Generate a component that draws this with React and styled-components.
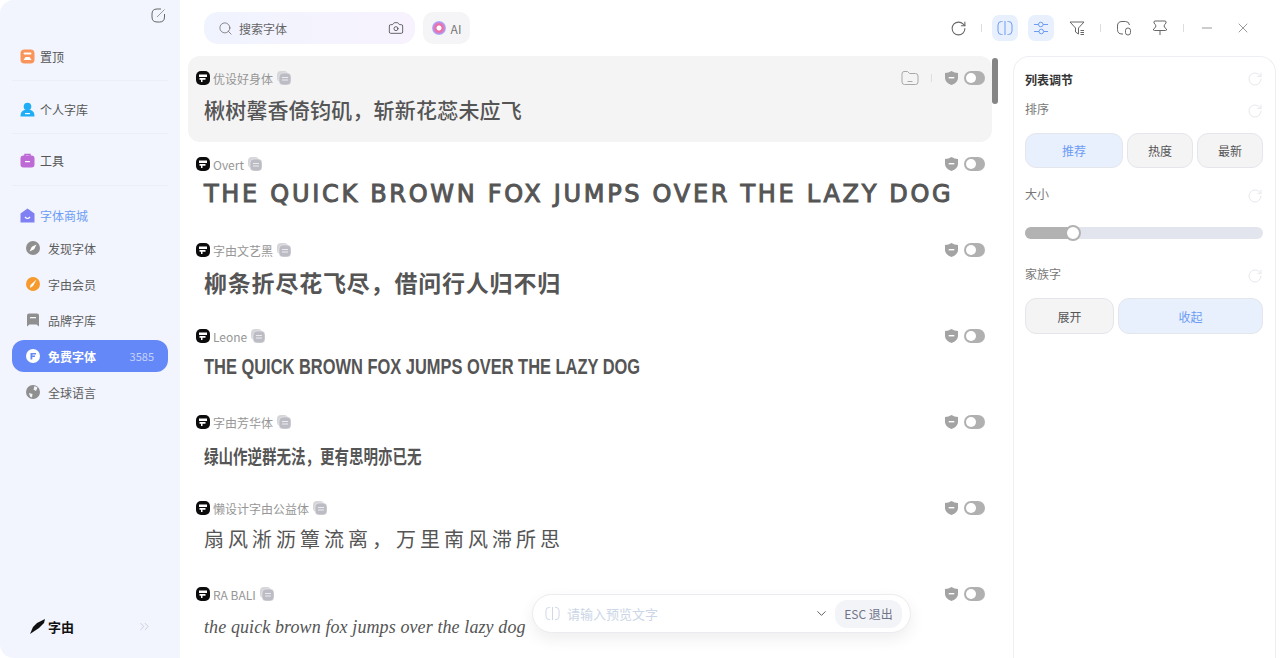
import React from "react";
import styled, { createGlobalStyle } from "styled-components";
import { Camera, ChevronDown, ChevronsRight, Minus, RotateCw, Search, X } from "lucide-react";

const GlobalStyle = createGlobalStyle`
  html, body {
    margin: 0;
    height: 100%;
    overflow: hidden;
    background: #fff;
  }
  * {
    box-sizing: border-box;
  }
  #root {
    height: 100%;
    font-family: "Noto Sans CJK SC", "Noto Sans", sans-serif;
  }
`;

const Shell = styled.div`
  position: relative;
  display: flex;
  width: 1280px;
  height: 658px;
  background: #fff;
`;

const Sidebar = styled.aside`
  width: 180px;
  flex-shrink: 0;
  height: 100%;
  display: flex;
  flex-direction: column;
  padding: 0 12px;
  background: #f2f5fe;
  border-radius: 14px 0 0 14px;
`;

const SideTop = styled.div`
  height: 32px;
  display: flex;
  justify-content: flex-end;
  padding: 8px 2px 0 0;
`;

const Section = styled.div`
  height: ${p => p.$h || 52}px;
  padding-top: ${p => p.$pad || 0}px;
  padding-left: 8px;
  display: flex;
  align-items: center;
  gap: 5px;
  font-size: 12px;
  color: ${p => p.$color || "#555"};
  border-bottom: ${p => (p.$line ? "1px solid #ebeef5" : "none")};
`;

const NavList = styled.nav`
  display: flex;
  flex-direction: column;
  gap: 4px;
`;

const NavItem = styled.div`
  height: 32px;
  display: flex;
  align-items: center;
  gap: 8px;
  padding: 0 14px;
  border-radius: 12px;
  font-size: 12px;
  font-weight: ${p => (p.$active ? 700 : 400)};
  color: ${p => (p.$active ? "#fff" : "#5c5c5c")};
  background: ${p => (p.$active ? "#6488f7" : "transparent")};
`;

const Count = styled.span`
  margin-left: auto;
  font-size: 11px;
  font-weight: 400;
  color: #c5d2fb;
`;

const SideFoot = styled.div`
  margin-top: auto;
  height: 60px;
  display: flex;
  align-items: center;
  justify-content: space-between;
  padding: 0 16px 4px 17px;
  color: #b0b6c6;
`;

const Logo = styled.div`
  display: flex;
  align-items: center;
  gap: 2px;
  font-family: "Liberation Serif", "Noto Sans CJK SC", serif;
  font-weight: 700;
  font-size: 13px;
  color: #111;
`;

const Main = styled.main`
  flex: 1;
  min-width: 0;
  display: flex;
  flex-direction: column;
`;

const TopBar = styled.header`
  height: 56px;
  flex-shrink: 0;
  display: flex;
  align-items: center;
  padding: 0 19px 0 24px;
`;

const SearchBox = styled.div`
  width: 211px;
  height: 32px;
  display: flex;
  align-items: center;
  gap: 6px;
  padding: 0 11px 0 14px;
  border-radius: 14px;
  background: linear-gradient(90deg, #f0f4fe, #f7f2fe);
  font-size: 12px;
  color: #666;
  svg:last-child {
    margin-left: auto;
  }
`;

const AiButton = styled.div`
  width: 47px;
  height: 32px;
  margin-left: 8px;
  display: flex;
  align-items: center;
  justify-content: center;
  gap: 5px;
  border-radius: 10px;
  background: #f5f5f7;
  font-size: 12px;
  color: #777;
`;

const AiDot = styled.span`
  width: 14px;
  height: 14px;
  border-radius: 50%;
  background: radial-gradient(circle, #fff 0 2px, #ec6fa8 3px 4px, #b795ee 6px, #a8c4f5 7px);
`;

const Tools = styled.div`
  margin-left: auto;
  display: flex;
  align-items: center;
  color: #666;
`;

const ToolBtn = styled.div`
  width: 26px;
  height: 26px;
  margin: 0 5px;
  display: flex;
  align-items: center;
  justify-content: center;
  border-radius: 7px;
  color: ${p => (p.$on ? "#6c9cf5" : "#666")};
  background: ${p => (p.$on ? "#e8f0fe" : "transparent")};
`;

const ToolSep = styled.i`
  width: 1px;
  height: 8px;
  margin: 0 5px;
  background: #ddd;
`;

const Content = styled.div`
  flex: 1;
  min-height: 0;
  display: flex;
  padding: 0 4px 0 8px;
`;

const ListWrap = styled.div`
  position: relative;
  width: 812px;
  flex-shrink: 0;
  overflow: hidden;
`;

const Scrollbar = styled.div`
  position: absolute;
  top: 2px;
  right: 2px;
  width: 6px;
  height: 46px;
  border-radius: 3px;
  background: #858585;
`;

const Row = styled.div`
  width: 804px;
  height: 86px;
  padding: 14px 7px 0 8px;
  border-radius: 12px;
  background: ${p => (p.$active ? "#f4f4f4" : "transparent")};
`;

const Meta = styled.div`
  height: 16px;
  display: flex;
  align-items: center;
  font-size: 12px;
  color: #969696;
`;

const MetaName = styled.span`
  margin: 0 4px 0 3px;
`;

const MetaRight = styled.div`
  margin-left: auto;
  display: flex;
  align-items: center;
  gap: 6px;
`;

const Folder = styled.span`
  display: flex;
  color: #a8a8a8;
  margin-right: 6px;
`;

const Sep = styled.i`
  width: 1px;
  height: 8px;
  margin-right: 7px;
  background: #ddd;
`;

const Toggle = styled.span`
  width: 21px;
  height: 14px;
  padding: 2px;
  border-radius: 7px;
  background: #b0b0b0;
  display: flex;
  span {
    width: 10px;
    height: 10px;
    border-radius: 50%;
    background: #fff;
  }
`;

const Sample = styled.div`
  height: 40px;
  margin-top: ${p => p.$top ?? 3}px;
  padding-left: 8px;
  display: flex;
  align-items: center;
  white-space: nowrap;
  color: #555;
  font-family: ${p => p.$family || '"Noto Sans CJK SC", sans-serif'};
  font-size: ${p => p.$size}px;
  font-weight: ${p => p.$weight || 400};
  font-style: ${p => (p.$italic ? "italic" : "normal")};
  letter-spacing: ${p => p.$spacing || 0}px;
  -webkit-text-stroke: ${p => p.$stroke || 0}px #555;
`;

const SampleText = styled.span`
  display: inline-block;
  transform-origin: left center;
  transform: scale(${p => p.$scaleX || 1}, ${p => p.$scaleY || 1});
`;

const Panel = styled.section`
  margin-left: 13px;
  width: 263px;
  height: 100%;
  padding: 13px 12px 0 11px;
  border: 1px solid #eeeff2;
  border-bottom: none;
  border-radius: 16px 16px 0 0;
`;

const PanelHead = styled.div`
  height: 18px;
  display: flex;
  align-items: center;
  justify-content: space-between;
  font-size: 12px;
  font-weight: ${p => (p.$title ? 700 : 400)};
  color: ${p => (p.$title ? "#333" : "#777")};
  margin-top: ${p => p.$top || 0}px;
  svg {
    color: #e6e8ee;
    margin-top: ${p => (p.$title ? 0 : 5)}px;
  }
`;

const PanelRow = styled.div`
  display: grid;
  grid-template-columns: ${p => p.$cols};
  gap: 4px;
  margin-top: ${p => p.$top}px;
`;

const Choice = styled.div`
  height: ${p => p.$h || 36}px;
  display: flex;
  align-items: center;
  justify-content: center;
  font-size: 12px;
  border-radius: 11px;
  border: 1px solid #e4e6ec;
  color: ${p => (p.$on ? "#6c9cf5" : "#555")};
  background: ${p => (p.$on ? "#e8f0fd" : "#f4f4f5")};
`;

const Slider = styled.div`
  position: relative;
  height: 12px;
  margin-top: 25px;
  border-radius: 6px;
  background: #e2e5ed;
`;

const SliderFill = styled.div`
  height: 100%;
  border-radius: 6px;
  background: #b2b2b2;
`;

const SliderThumb = styled.span`
  position: absolute;
  top: -2px;
  width: 16px;
  height: 16px;
  border-radius: 50%;
  background: #fff;
  border: 2px solid #b2b2b2;
`;

const PreviewBar = styled.div`
  position: absolute;
  left: 532px;
  top: 594px;
  width: 379px;
  height: 39px;
  display: flex;
  align-items: center;
  padding: 0 8px 0 12px;
  border: 1px solid #ececf0;
  border-radius: 20px;
  background: #fff;
  box-shadow: 0 6px 16px rgba(0, 0, 0, 0.07);
  font-size: 13px;
  color: #cbd6e6;
`;

const PreviewText = styled.span`
  margin-left: 7px;
`;

const EscBtn = styled.div`
  width: 67px;
  height: 28px;
  margin-left: 6px;
  display: flex;
  align-items: center;
  justify-content: center;
  border-radius: 12px;
  background: #f3f4f7;
  font-size: 12px;
  color: #70748a;
`;

const PreviewChevron = styled(ChevronDown)`
  margin-left: auto;
  color: #555;
`;

const Sq = ({ c, children }) => (
  <svg width="15" height="15" viewBox="0 0 15 15">
    <rect x="0.5" y="0.5" width="14" height="14" rx="4" fill={c} />
    {children}
  </svg>
);

const PinIcon = () => (
  <Sq c="#f9955a">
    <rect x="3.5" y="3.5" width="8" height="2" fill="#fff" rx="1" />
    <path d="M3.5 11 L5.5 8 H9.5 L11.5 11 Z" fill="#fff" />
  </Sq>
);

const UserIcon = () => (
  <svg width="15" height="15" viewBox="0 0 15 15">
    <circle cx="7.5" cy="4.5" r="3.8" fill="#1faef5" />
    <path d="M0.5 14.5 C0.5 9.5 3 7.5 7.5 7.5 C12 7.5 14.5 9.5 14.5 14.5 Z" fill="#1faef5" />
    <rect x="5" y="11" width="5" height="1.2" fill="#fff" />
  </svg>
);

const ToolIcon = () => (
  <svg width="15" height="15" viewBox="0 0 15 15">
    <path d="M5 3 V1.5 H10 V3" fill="none" stroke="#bd6ad6" strokeWidth="1.5" />
    <rect x="0.5" y="2.5" width="14" height="12" rx="3" fill="#bd6ad6" />
    <rect x="5" y="8" width="5" height="1.2" fill="#fff" />
  </svg>
);

const StoreIcon = () => (
  <svg width="15" height="15" viewBox="0 0 15 15">
    <path d="M7.5 0.5 L14.5 5.5 V14.5 H0.5 V5.5 Z" fill="#7f80f3" />
    <path d="M5 9 Q7.5 12 10 9" fill="none" stroke="#fff" strokeWidth="1.2" />
  </svg>
);

const CompassIcon = () => (
  <svg width="14" height="14" viewBox="0 0 14 14">
    <circle cx="7" cy="7" r="7" fill="#8f8f8f" />
    <path d="M10.5 3.5 L8.2 8.2 L3.5 10.5 L5.8 5.8 Z" fill="#fff" />
  </svg>
);

const VipIcon = () => (
  <svg width="14" height="14" viewBox="0 0 14 14">
    <circle cx="7" cy="7" r="7" fill="#f79a2e" />
    <path d="M10.5 2.5 L7 9 L4 11 L4.5 8 Z" fill="#fff" />
  </svg>
);

const BrandIcon = () => (
  <svg width="14" height="14" viewBox="0 0 14 14">
    <path d="M3 0.5 H11 Q13 0.5 13 2.5 V13.5 L10.5 11.5 H3.5 L1 13.5 V2.5 Q1 0.5 3 0.5 Z" fill="#8f8f8f" />
    <rect x="4" y="4" width="6" height="1.3" fill="#f2f5fe" />
  </svg>
);

const FreeIcon = () => (
  <svg width="14" height="14" viewBox="0 0 14 14">
    <circle cx="7" cy="7" r="7" fill="#fff" />
    <path d="M4.5 4 H10 V5.6 H6.3 V6.6 H9 V8.1 H6.3 V10.4 H4.5 Z" fill="#6488f7" />
  </svg>
);

const GlobeIcon = () => (
  <svg width="14" height="14" viewBox="0 0 14 14">
    <circle cx="7" cy="7" r="7" fill="#8f8f8f" />
    <path d="M8.5 1 L11.5 2.5 L10 6 L7.5 4.5 Z M3 8 L6.5 9 L6 12.5 L4 11.5 Z" fill="#f2f5fe" />
  </svg>
);

const FontBadge = () => (
  <svg width="14" height="14" viewBox="0 0 14 14">
    <rect width="14" height="14" rx="5" fill="#0c0c0c" />
    <path d="M3 3.5 H11 V6 H3 Z M3.5 7 H9.5 V8.7 H6.5 V11 H5 V8.7 H3.5 Z" fill="#fff" />
  </svg>
);

const CopyIcon = () => (
  <svg width="14" height="14" viewBox="0 0 14 14">
    <rect x="0" y="0" width="11" height="11" rx="4" fill="#d6d6da" />
    <rect x="2" y="2" width="12" height="12" rx="4" fill="#bcbcc4" stroke="#fff" strokeWidth="0.4" />
    <rect x="5" y="6" width="6" height="1" fill="#ececf0" />
    <rect x="5" y="8.5" width="6" height="1" fill="#ececf0" />
  </svg>
);

const ShieldIcon = () => (
  <svg width="13" height="14" viewBox="0 0 13 14">
    <path d="M0 2 Q3.5 2 6.5 0 Q9.5 2 13 2 V7 Q13 11.5 6.5 14 Q0 11.5 0 7 Z" fill="#a3a3a3" />
    <rect x="3.7" y="6" width="5.6" height="1.4" fill="#fff" />
  </svg>
);

const FolderIcon = () => (
  <svg width="18" height="16" viewBox="0 0 18 16" fill="none" stroke="currentColor" strokeWidth="1">
    <path d="M1 4 Q1 1.5 3 1.5 H6.5 L8.5 3.5 H14.5 Q17 3.5 17 6 V12 Q17 14.5 14.5 14.5 H3.5 Q1 14.5 1 12 Z" />
    <path d="M6.5 11.5 H11.5" />
  </svg>
);

const EditIcon = () => (
  <svg width="15" height="15" viewBox="0 0 15 15" fill="none" stroke="#666" strokeWidth="1">
    <path d="M13.5 6 V9 Q13.5 14 8.5 14 H6 Q1 14 1 9 V6 Q1 1 6 1 H10" />
    <path d="M6 9 L13.5 1.5" stroke="#999" />
  </svg>
);

const SplitIcon = ({ size = 16 }) => (
  <svg width={size} height={size} viewBox="0 0 16 16" fill="none" stroke="currentColor" strokeWidth="1">
    <path d="M5.5 1.5 H4.5 Q1 1.5 1 5 V11 Q1 14.5 4.5 14.5 H5.5" />
    <path d="M10.5 1.5 H11.5 Q15 1.5 15 5 V11 Q15 14.5 11.5 14.5 H10.5" />
    <path d="M8 1 V15" />
  </svg>
);

const TuneIcon = () => (
  <svg width="16" height="16" viewBox="0 0 16 16" fill="none" stroke="currentColor" strokeWidth="1">
    <path d="M1 4.5 H5.5 M10 4.5 H15 M1 11.5 H6 M10.5 11.5 H15" />
    <circle cx="7.8" cy="4.5" r="2.3" />
    <circle cx="8.3" cy="11.5" r="2.3" />
  </svg>
);

const FilterIcon = () => (
  <svg width="16" height="16" viewBox="0 0 16 16" fill="none" stroke="currentColor" strokeWidth="1">
    <path d="M1 2 H15 L9.5 8 V14 L6.5 12 V8 Z" />
    <path d="M11.5 10.5 H15 M11.5 12.5 H15 M11.5 14.5 H15" />
  </svg>
);

const FontCopyIcon = () => (
  <svg width="16" height="16" viewBox="0 0 16 16" fill="none" stroke="currentColor" strokeWidth="1">
    <path d="M7 14 H6 Q1.5 14 1.5 9.5 V6 Q1.5 1.5 6 1.5 H9.5 Q13 1.5 13.5 5" />
    <rect x="9.5" y="8" width="5" height="7" rx="2.4" />
  </svg>
);

const PushPinIcon = () => (
  <svg width="16" height="16" viewBox="0 0 16 16" fill="none" stroke="currentColor" strokeWidth="1">
    <path d="M3 1 H13 Q14.5 1 14 3 Q12.5 4.5 12 6 Q12.5 8 14.5 9 Q15 10.5 13.5 10.5 H2.5 Q1 10.5 1.5 9 Q3.5 8 4 6 Q3.5 4.5 2 3 Q1.5 1 3 1 Z" />
    <path d="M8 10.5 V15" />
  </svg>
);

const PenLogo = () => (
  <svg width="17" height="15" viewBox="0 0 17 15">
    <path d="M16 0 L15 4 L10 9 L7 11 L1 15 L4 8 L8 4 Z" fill="#111" />
  </svg>
);

const Refresh = ({ size = 16 }) => <RotateCw size={size} strokeWidth={1.5} />;

const sections = [
  { name: "发现字体", icon: <CompassIcon /> },
  { name: "字由会员", icon: <VipIcon /> },
  { name: "品牌字库", icon: <BrandIcon /> },
  { name: "免费字体", icon: <FreeIcon />, active: true, count: 3585 },
  { name: "全球语言", icon: <GlobeIcon /> }
];

const fonts = [
  { name: "优设好身体", text: "楸树馨香倚钧矶，斩新花蕊未应飞", size: 21, weight: 500, spacing: 0.2, active: true },
  { name: "Overt", text: "THE QUICK BROWN FOX JUMPS OVER THE LAZY DOG", family: '"DejaVu Sans", sans-serif', size: 24, spacing: 2.7, stroke: 1, top: 2 },
  { name: "字由文艺黑", text: "柳条折尽花飞尽，借问行人归不归", size: 23, weight: 700, spacing: 0.8, top: 4 },
  { name: "Leone", text: "THE QUICK BROWN FOX JUMPS OVER THE LAZY DOG", family: '"Liberation Sans", sans-serif', size: 22, weight: 700, scaleX: 0.747, top: 3 },
  { name: "字由芳华体", text: "绿山作逆群无法，更有思明亦已无", size: 14.5, weight: 700, scaleY: 1.3, top: 5 },
  { name: "懒设计字由公益体", text: "扇风淅沥簟流离，万里南风滞所思", size: 20, spacing: 4, top: 2 },
  { name: "RA BALI", text: "the quick brown fox jumps over the lazy dog", family: '"Liberation Serif", serif', size: 18, italic: true, spacing: 0.1, top: 5 }
];

export default function App() {
  return (
    <Shell>
      <GlobalStyle />
      <Sidebar>
        <SideTop>
          <EditIcon />
        </SideTop>
        <Section $h={49} $line>
          <PinIcon />
          置顶
        </Section>
        <Section $h={53} $pad={4} $line>
          <UserIcon />
          个人字库
        </Section>
        <Section $pad={2} $line>
          <ToolIcon />
          工具
        </Section>
        <Section $h={46} $pad={12} $color="#6c9cf5">
          <StoreIcon />
          字体商城
        </Section>
        <NavList>
          {sections.map(s => (
            <NavItem key={s.name} $active={s.active}>
              {s.icon}
              {s.name}
              {s.count && <Count>{s.count}</Count>}
            </NavItem>
          ))}
        </NavList>
        <SideFoot>
          <Logo>
            <PenLogo />
            字由
          </Logo>
          <ChevronsRight size={15} strokeWidth={1} />
        </SideFoot>
      </Sidebar>
      <Main>
        <TopBar>
          <SearchBox>
            <Search size={15} strokeWidth={1.2} />
            搜索字体
            <Camera size={16} strokeWidth={1.2} color="#444" />
          </SearchBox>
          <AiButton>
            <AiDot />
            AI
          </AiButton>
          <Tools>
            <ToolBtn><Refresh size={17} /></ToolBtn>
            <ToolSep />
            <ToolBtn $on><SplitIcon /></ToolBtn>
            <ToolBtn $on><TuneIcon /></ToolBtn>
            <ToolBtn><FilterIcon /></ToolBtn>
            <ToolSep />
            <ToolBtn><FontCopyIcon /></ToolBtn>
            <ToolBtn><PushPinIcon /></ToolBtn>
            <ToolSep />
            <ToolBtn><Minus size={16} strokeWidth={1} /></ToolBtn>
            <ToolBtn><X size={16} strokeWidth={1} /></ToolBtn>
          </Tools>
        </TopBar>
        <Content>
          <ListWrap>
            {fonts.map(f => (
              <Row key={f.name} $active={f.active}>
                <Meta>
                  <FontBadge />
                  <MetaName>{f.name}</MetaName>
                  <CopyIcon />
                  <MetaRight>
                    {f.active && (
                      <>
                        <Folder><FolderIcon /></Folder>
                        <Sep />
                      </>
                    )}
                    <ShieldIcon />
                    <Toggle><span /></Toggle>
                  </MetaRight>
                </Meta>
                <Sample $family={f.family} $size={f.size} $weight={f.weight} $spacing={f.spacing} $italic={f.italic} $stroke={f.stroke} $top={f.top}>
                  <SampleText $scaleX={f.scaleX} $scaleY={f.scaleY}>{f.text}</SampleText>
                </Sample>
              </Row>
            ))}
            <Scrollbar />
          </ListWrap>
          <Panel>
            <PanelHead $title>列表调节<Refresh /></PanelHead>
            <PanelHead $top={11}>排序<Refresh /></PanelHead>
            <PanelRow $cols="98px 66px 66px" $top={16}>
              <Choice $h={35} $on>推荐</Choice>
              <Choice $h={35}>热度</Choice>
              <Choice $h={35}>最新</Choice>
            </PanelRow>
            <PanelHead $top={16}>大小<Refresh /></PanelHead>
            <Slider>
              <SliderFill style={{ width: "20%" }} />
              <SliderThumb style={{ left: "16.8%" }} />
            </Slider>
            <PanelHead $top={25}>家族字<Refresh /></PanelHead>
            <PanelRow $cols="89px 145px" $top={16}>
              <Choice>展开</Choice>
              <Choice $on>收起</Choice>
            </PanelRow>
          </Panel>
        </Content>
      </Main>
      <PreviewBar>
        <SplitIcon size={15} />
        <PreviewText>请输入预览文字</PreviewText>
        <PreviewChevron size={15} strokeWidth={1.5} />
        <EscBtn>ESC 退出</EscBtn>
      </PreviewBar>
    </Shell>
  );
}
